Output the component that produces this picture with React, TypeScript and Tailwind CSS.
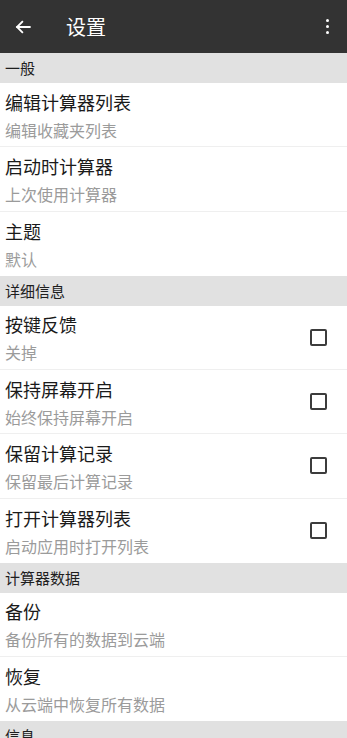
import React from "react";

type Item = { title: string; sub: string; check?: boolean };
type Section = { name: string; items: Item[] };

const sections: Section[] = [
  {
    name: "一般",
    items: [
      { title: "编辑计算器列表", sub: "编辑收藏夹列表" },
      { title: "启动时计算器", sub: "上次使用计算器" },
      { title: "主题", sub: "默认" },
    ],
  },
  {
    name: "详细信息",
    items: [
      { title: "按键反馈", sub: "关掉", check: true },
      { title: "保持屏幕开启", sub: "始终保持屏幕开启", check: true },
      { title: "保留计算记录", sub: "保留最后计算记录", check: true },
      { title: "打开计算器列表", sub: "启动应用时打开列表", check: true },
    ],
  },
  {
    name: "计算器数据",
    items: [
      { title: "备份", sub: "备份所有的数据到云端" },
      { title: "恢复", sub: "从云端中恢复所有数据" },
    ],
  },
  { name: "信息", items: [] },
];

export default function App() {
  return (
    <div
      className="w-[347px] h-[738px] overflow-hidden bg-white"
      style={{ fontFamily: '"Noto Sans CJK SC", "Noto Sans", sans-serif' }}
    >
      {/* toolbar */}
      <div className="h-[53px] bg-[#333333] flex items-center text-white">
        <div className="w-[46px] flex justify-center pl-[0px]">
          <svg width="18" height="18" viewBox="0 0 24 24" fill="none" stroke="white" strokeWidth="2.4" strokeLinecap="square">
            <path d="M21 12H4M11 5l-7 7 7 7" />
          </svg>
        </div>
        <div className="ml-[20px] text-[20px] leading-none">设置</div>
        <div className="ml-auto mr-[18px] flex flex-col gap-[3px]">
          <span className="block w-[3px] h-[3px] bg-white rounded-full" />
          <span className="block w-[3px] h-[3px] bg-white rounded-full" />
          <span className="block w-[3px] h-[3px] bg-white rounded-full" />
        </div>
      </div>

      {sections.map((s) => (
        <div key={s.name}>
          <div className="h-[30px] bg-[#e1e1e1] flex items-center px-[5px] text-[15px] text-[#1e1e1e]">
            {s.name}
          </div>
          {s.items.map((it, i) => (
            <div
              key={it.title}
              className={
                "h-[64.25px] flex items-center pr-[20px] " +
                (i < s.items.length - 1 ? "border-b border-[#efefef]" : "")
              }
            >
              <div className="flex-1 pl-[5px] pt-[1px]">
                <div className="text-[18px] leading-[24px] text-[#1a1a1a]">{it.title}</div>
                <div className="mt-[5px] text-[16px] leading-[22px] text-[#9b9b9b]">{it.sub}</div>
              </div>
              {it.check && (
                <div className="w-[17px] h-[17px] border-2 border-[#3c3c3c] rounded-[2px]" />
              )}
            </div>
          ))}
        </div>
      ))}
    </div>
  );
}
